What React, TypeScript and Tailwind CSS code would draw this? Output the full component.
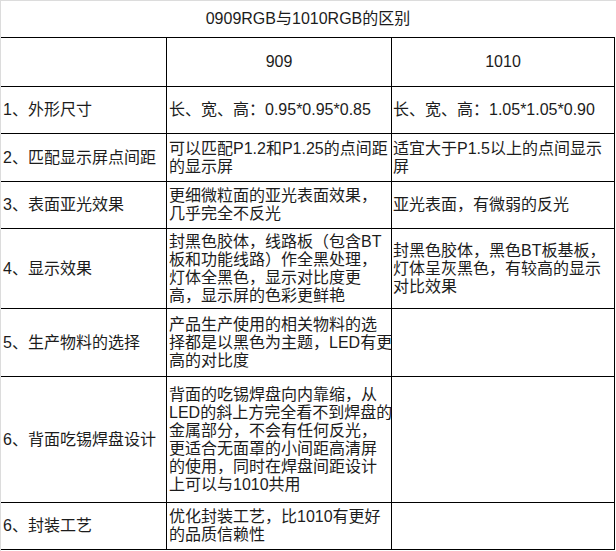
import React from "react";

type Row = {
  label: string;
  a: string[];
  b: string[];
  h: string;
};

const rows: Row[] = [
  { label: "1、外形尺寸", a: ["长、宽、高：0.95*0.95*0.85"], b: ["长、宽、高：1.05*1.05*0.90"], h: "h-[47px]" },
  { label: "2、匹配显示屏点间距", a: ["可以匹配P1.2和P1.25的点间距", "的显示屏"], b: ["适宜大于P1.5以上的点间显示", "屏"], h: "h-[48px]" },
  { label: "3、表面亚光效果", a: ["更细微粒面的亚光表面效果，", "几乎完全不反光"], b: ["亚光表面，有微弱的反光"], h: "h-[47px]" },
  {
    label: "4、显示效果",
    a: ["封黑色胶体，线路板（包含BT", "板和功能线路）作全黑处理，", "灯体全黑色，显示对比度更", "高，显示屏的色彩更鲜艳"],
    b: ["封黑色胶体，黑色BT板基板，", "灯体呈灰黑色，有较高的显示", "对比效果"],
    h: "h-[80px]",
  },
  {
    label: "5、生产物料的选择",
    a: ["产品生产使用的相关物料的选", "择都是以黑色为主题，LED有更", "高的对比度"],
    b: [],
    h: "h-[68px]",
  },
  {
    label: "6、背面吃锡焊盘设计",
    a: [
      "背面的吃锡焊盘向内靠缩，从",
      "LED的斜上方完全看不到焊盘的",
      "金属部分，不会有任何反光，",
      "更适合无面罩的小间距高清屏",
      "的使用，同时在焊盘间距设计",
      "上可以与1010共用",
    ],
    b: [],
    h: "h-[126px]",
  },
  { label: "6、封装工艺", a: ["优化封装工艺，比1010有更好", "的品质信赖性"], b: [], h: "h-[47px]" },
];

function Lines({ lines }: { lines: string[] }) {
  return (
    <div className="flex flex-col">
      {lines.map((l, i) => (
        <span key={i} className="block h-[18px] whitespace-nowrap">
          {l}
        </span>
      ))}
    </div>
  );
}

export default function App() {
  return (
    <div
      className="w-[616px] h-[551px] bg-white border-t border-l border-[#dcdcdc] text-[16px] leading-[18px] text-[#1c1c1c] overflow-hidden"
      style={{ fontFamily: '"Liberation Sans", "Noto Sans CJK SC", sans-serif' }}
    >
      <div className="grid grid-cols-[166px_225px_223px]">
        {/* title */}
        <div className="col-span-3 h-[37px] border-b border-black flex items-center justify-center">
          0909RGB与1010RGB的区别
        </div>

        {/* header */}
        <div className="h-[49px] border-b border-r border-black" />
        <div className="h-[49px] border-b border-r border-black flex items-center justify-center">909</div>
        <div className="h-[49px] border-b border-r border-black flex items-center justify-center">1010</div>

        {rows.map((r, i) => (
          <React.Fragment key={i}>
            <div className={`${r.h} border-b border-r border-black flex items-center pl-[2px] whitespace-nowrap`}>
              {r.label}
            </div>
            <div className={`${r.h} border-b border-r border-black flex items-center pl-[2px]`}>
              <Lines lines={r.a} />
            </div>
            <div className={`${r.h} border-b border-r border-black flex items-center pl-[1px]`}>
              <Lines lines={r.b} />
            </div>
          </React.Fragment>
        ))}
      </div>
    </div>
  );
}
